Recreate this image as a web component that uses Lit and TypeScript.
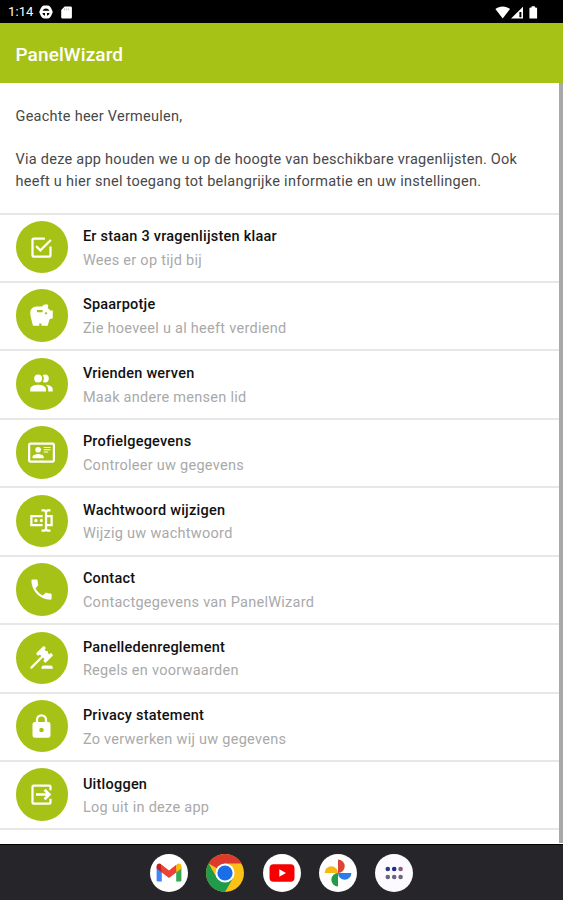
import { LitElement, html, css, svg } from "lit";
import { customElement } from "lit/decorators.js";

interface MenuItem {
  title: string;
  subtitle: string;
  icon: string;
}

const ITEMS: MenuItem[] = [
  {
    title: "Er staan 3 vragenlijsten klaar",
    subtitle: "Wees er op tijd bij",
    icon: "M19,19H5V5H15V3H5C3.89,3 3,3.89 3,5V19A2,2 0 0,0 5,21H19A2,2 0 0,0 21,19V11H19M7.91,10.08L6.5,11.5L11,16L21,6L19.59,4.58L11,13.17L7.91,10.08Z",
  },
  {
    title: "Spaarpotje",
    subtitle: "Zie hoeveel u al heeft verdiend",
    icon: "M19.83 7.5L17.56 5.23C17.63 4.81 17.74 4.42 17.88 4.08C17.96 3.9 18 3.71 18 3.5C18 2.67 17.33 2 16.5 2C14.86 2 13.41 2.79 12.5 4H7.5C4.46 4 2 6.46 2 9.5S4.5 21 4.5 21H10V19H12V21H17.5L19.18 15.41L22 14.47V7.5H19.83M13 9H8V7H13V9M16 11C15.45 11 15 10.55 15 10S15.45 9 16 9C16.55 9 17 9.45 17 10S16.55 11 16 11Z",
  },
  {
    title: "Vrienden werven",
    subtitle: "Maak andere mensen lid",
    icon: "M16 17V19H2V17S2 13 9 13 16 17 16 17M12.5 7.5A3.5 3.5 0 1 0 9 11A3.5 3.5 0 0 0 12.5 7.5M15.94 13A5.32 5.32 0 0 1 18 17V19H22V17S22 13.37 15.94 13M15 4A3.39 3.39 0 0 0 13.07 4.59A5 5 0 0 1 13.07 10.41A3.39 3.39 0 0 0 15 11A3.5 3.5 0 0 0 15 4Z",
  },
  {
    title: "Profielgegevens",
    subtitle: "Controleer uw gegevens",
    icon: "M22,3H2C0.91,3.04 0.04,3.91 0,5V19C0.04,20.09 0.91,20.96 2,21H22C23.09,20.96 23.96,20.09 24,19V5C23.96,3.91 23.09,3.04 22,3M22,19H2V5H22V19M14,17V15.75C14,14.09 10.66,13.25 9,13.25C7.34,13.25 4,14.09 4,15.75V17H14M9,7A2.5,2.5 0 0,0 6.5,9.5A2.5,2.5 0 0,0 9,12A2.5,2.5 0 0,0 11.5,9.5A2.5,2.5 0 0,0 9,7M14,7V8H20V7H14M14,9V10H20V9H14M14,11V12H18V11H14",
  },
  {
    title: "Wachtwoord wijzigen",
    subtitle: "Wijzig uw wachtwoord",
    icon: "M17,7H22V17H17V19A1,1 0 0,0 18,20H20V22H17.5C16.95,22 16,21.55 16,21C16,21.55 15.05,22 14.5,22H12V20H14A1,1 0 0,0 15,19V5A1,1 0 0,0 14,4H12V2H14.5C15.05,2 16,2.45 16,3C16,2.45 16.95,2 17.5,2H20V4H18A1,1 0 0,0 17,5V7M2,7H13V9H4V15H13V17H2V7M20,15V9H17V15H20M8.5,12A1.5,1.5 0 0,0 7,10.5A1.5,1.5 0 0,0 5.5,12A1.5,1.5 0 0,0 7,13.5A1.5,1.5 0 0,0 8.5,12M13,10.89C12.39,10.33 11.44,10.38 10.88,11C10.32,11.6 10.37,12.55 11,13.11C11.55,13.63 12.43,13.63 13,13.11V10.89Z",
  },
  {
    title: "Contact",
    subtitle: "Contactgegevens van PanelWizard",
    icon: "M6.62,10.79C8.06,13.62 10.38,15.94 13.21,17.38L15.41,15.18C15.69,14.9 16.08,14.82 16.43,14.93C17.55,15.3 18.75,15.5 20,15.5A1,1 0 0,1 21,16.5V20A1,1 0 0,1 20,21A17,17 0 0,1 3,4A1,1 0 0,1 4,3H7.5A1,1 0 0,1 8.5,4C8.5,5.25 8.7,6.45 9.07,7.57C9.18,7.92 9.1,8.31 8.82,8.59L6.62,10.79Z",
  },
  {
    title: "Panelledenreglement",
    subtitle: "Regels en voorwaarden",
    icon: "M2.3,20.28L11.9,10.68L10.5,9.26L9.78,9.97C9.39,10.36 8.76,10.36 8.37,9.97L7.66,9.26C7.27,8.87 7.27,8.24 7.66,7.85L13.32,2.19C13.71,1.8 14.34,1.8 14.73,2.19L15.44,2.9C15.83,3.29 15.83,3.92 15.44,4.31L14.73,5L16.15,6.43C16.54,6.04 17.17,6.04 17.56,6.43C17.95,6.82 17.95,7.46 17.56,7.85L18.97,9.26L19.68,8.55C20.07,8.16 20.71,8.16 21.1,8.55L21.8,9.26C22.19,9.65 22.19,10.29 21.8,10.68L16.15,16.33C15.76,16.72 15.12,16.72 14.73,16.33L14.03,15.63C13.63,15.24 13.63,14.6 14.03,14.21L14.73,13.5L13.32,12.09L3.71,21.7C3.32,22.09 2.69,22.09 2.3,21.7C1.91,21.31 1.91,20.67 2.3,20.28M20,19A2,2 0 0,1 22,21V22H12V21A2,2 0 0,1 14,19H20Z",
  },
  {
    title: "Privacy statement",
    subtitle: "Zo verwerken wij uw gegevens",
    icon: "M12,17A2,2 0 0,0 14,15C14,13.89 13.1,13 12,13A2,2 0 0,0 10,15A2,2 0 0,0 12,17M18,8A2,2 0 0,1 20,10V20A2,2 0 0,1 18,22H6A2,2 0 0,1 4,20V10C4,8.89 4.9,8 6,8H7V6A5,5 0 0,1 12,1A5,5 0 0,1 17,6V8H18M12,3A3,3 0 0,0 9,6V8H15V6A3,3 0 0,0 12,3Z",
  },
  {
    title: "Uitloggen",
    subtitle: "Log uit in deze app",
    icon: "M5 3H19A2 2 0 0 1 21 5V8.2H19V5H5V19H19V15.8H21V19A2 2 0 0 1 19 21H5A2 2 0 0 1 3 19V5A2 2 0 0 1 5 3ZM13.9 15.4L16.2 13.2H7V10.8H16.2L13.9 8.6L15.6 6.9L20.7 12L15.6 17.1Z",
  },
];

const DOCK = [
  svg`<circle cx="20" cy="20" r="19" fill="#fff"/>
    <path d="M7.6 14V27.2A1.3 1.3 0 0 0 8.9 28.5H12.8V17Z" fill="#4285f4"/>
    <path d="M27.2 17V28.5H31.1A1.3 1.3 0 0 0 32.4 27.2V14Z" fill="#34a853"/>
    <path d="M27.2 12.6V19.6L32.4 15.4V13.2C32.4 10.6 29.6 9.6 27.8 11.2Z" fill="#fbbc04"/>
    <path d="M7.6 13.2V15.4L12.8 19.6V12.6L12.2 11.2C10.4 9.6 7.6 10.6 7.6 13.2Z" fill="#c5221f"/>
    <path d="M12.8 19.6V11.8L20 17.4L27.2 11.8V19.6L20 25Z" fill="#ea4335"/>`,
  svg`<circle cx="20" cy="20" r="19" fill="#fbc116"/>
    <path d="M20 20L3.6 10.5A19 19 0 0 1 36.4 10.5H20Z" fill="#dc3a2c"/>
    <path d="M3.6 10.5A19 19 0 0 0 20 39L28.2 24.8L20 20L11.8 24.8Z" fill="#219a4b"/>
    <circle cx="20" cy="20" r="9.6" fill="#fff"/>
    <circle cx="20" cy="20" r="7.6" fill="#1a6fe8"/>`,
  svg`<circle cx="20" cy="20" r="19" fill="#fff"/>
    <rect x="7.5" y="11.2" width="25" height="17.6" rx="4" fill="#f60002"/>
    <path d="M17.3 16.2V23.8L24 20Z" fill="#fff"/>`,
  svg`<circle cx="20" cy="20" r="19" fill="#fff"/>
    <path d="M20 20V6.6A6.7 6.7 0 0 1 20 20Z" fill="#dc4437"/>
    <path d="M20 20H33.4A6.7 6.7 0 0 1 20 20Z" fill="#2b7de9"/>
    <path d="M20 20V33.4A6.7 6.7 0 0 1 20 20Z" fill="#259b48"/>
    <path d="M20 20H6.6A6.7 6.7 0 0 1 20 20Z" fill="#f6b914"/>`,
  svg`<circle cx="20" cy="20" r="19" fill="#fdfaff"/>
    <circle cx="13.8" cy="16" r="2.3" fill="#303a80"/>
    <circle cx="20.2" cy="16" r="2.3" fill="#1f2b8e"/>
    <circle cx="26.6" cy="16" r="2.3" fill="#8d5b78"/>
    <circle cx="13.8" cy="24" r="2.3" fill="#68687a"/>
    <circle cx="20.2" cy="24" r="2.3" fill="#68687a"/>
    <circle cx="26.6" cy="24" r="2.3" fill="#68687a"/>`,
];

@customElement("app-root")
export class AppRoot extends LitElement {
  static styles = css`
    :host {
      display: flex;
      flex-direction: column;
      position: relative;
      height: 900px;
      overflow: hidden;
      background: #fff;
      font-family: Roboto, "Liberation Sans", sans-serif;
    }
    .status {
      flex: none;
      height: 22.5px;
      background: #000;
      color: #fff;
      display: flex;
      align-items: center;
      justify-content: space-between;
      box-sizing: border-box;
      padding: 2px 25px 0 8px;
    }
    .group {
      display: flex;
      align-items: center;
    }
    .clock {
      font-size: 13px;
      line-height: 20px;
      width: 31px;
      letter-spacing: 0.1px;
    }
    .glyph {
      display: block;
      fill: #fff;
    }
    .sd {
      margin-left: 8px;
    }
    .battery {
      margin-left: 4.5px;
    }
    .header {
      flex: none;
      height: 60px;
      box-sizing: border-box;
      padding: 3px 15.5px 0;
      background: #a7c216;
      color: #fff;
      display: flex;
      align-items: center;
      font-size: 19px;
      font-weight: 500;
      letter-spacing: 0.1px;
    }
    .body {
      flex: 1;
      min-height: 0;
      overflow: hidden;
    }
    .intro {
      box-sizing: border-box;
      height: 130px;
      padding: 23.6px 15.5px 0;
      color: #484848;
      font-size: 14.5px;
      line-height: 21.6px;
      letter-spacing: 0.26px;
      white-space: nowrap;
    }
    .intro p {
      margin: 0 0 21.6px;
    }
    .row {
      height: 68.44px;
      box-sizing: border-box;
      border-top: 2px solid #e7e7e8;
      padding: 0 0 1.2px 15.5px;
      display: flex;
      align-items: center;
      gap: 15px;
    }
    .end {
      border-top: 2px solid #e7e7e8;
    }
    .badge {
      width: 52.4px;
      height: 52.4px;
      border-radius: 50%;
      background: #a7c216;
      display: flex;
      align-items: center;
      justify-content: center;
    }
    .badge svg {
      width: 27px;
      height: 27px;
      fill: #fff;
    }
    .texts {
      padding-top: 3px;
    }
    .title,
    .sub {
      line-height: 23.6px;
      font-size: 14.5px;
      white-space: nowrap;
    }
    .title {
      color: #111;
      font-weight: 500;
      letter-spacing: 0.23px;
    }
    .sub {
      color: #a9a9a9;
      letter-spacing: 0.27px;
    }
    .scroll {
      position: absolute;
      right: 0;
      top: 82.5px;
      width: 3.6px;
      height: 760px;
      background: #a9a9a9;
    }
    .dock {
      flex: none;
      height: 56px;
      box-sizing: border-box;
      border-top: 1px solid #000;
      background: #262529;
      display: flex;
      align-items: center;
      justify-content: center;
      gap: 16.3px;
    }
    .dock svg {
      display: block;
      width: 40px;
      height: 40px;
    }
  `;

  render() {
    return html`
      <div class="status">
        <div class="group">
          <span class="clock">1:14</span>
          <svg class="glyph" width="14" height="14" viewBox="0 0 14 14">
            <path
              fill-rule="evenodd"
              d="M3 1.6L4.6 0.6H9.4L11 1.6L12.2 3.2L13.8 7L12.2 10.8L11 12.4L9.4 13.4H4.6L3 12.4L1.8 10.8L0.2 7L1.8 3.2ZM3.6 5.7H10.4A3.7 3.7 0 0 0 3.6 5.7ZM3.3 8A3.8 3.8 0 0 0 6 10.7V8ZM8 8V10.7A3.8 3.8 0 0 0 10.7 8Z"
            />
          </svg>
          <svg class="glyph sd" width="11" height="13" viewBox="0 0 11 13">
            <path d="M3.6 0.5H9.7A1.2 1.2 0 0 1 10.9 1.7V11.3A1.2 1.2 0 0 1 9.7 12.5H1.4A1.2 1.2 0 0 1 0.2 11.3V3.9Z" />
            <path d="M3.6 2.4V4.3M5.6 2.4V4.3M7.6 2.4V4.3" stroke="#999" stroke-width="0.7" />
          </svg>
        </div>
        <div class="group">
          <svg class="glyph" width="30" height="13" viewBox="0 0 30 13">
            <path d="M0.4 3.1C4.4 -0.3 11 -0.3 15 3.1L7.7 12.6Z" />
            <path fill-rule="evenodd" d="M28 0.8V12.6H16ZM24.4 6V11.2H26.4V6Z" />
          </svg>
          <svg class="glyph battery" width="9" height="13" viewBox="0 0 9 13">
            <path d="M2.6 0.2H5.9V1.4H6.9A1.2 1.2 0 0 1 8.1 2.6V12.6H0.4V2.6A1.2 1.2 0 0 1 1.6 1.4H2.6Z" />
          </svg>
        </div>
      </div>
      <div class="header">PanelWizard</div>
      <div class="body">
        <div class="intro">
          <p>Geachte heer Vermeulen,</p>
          <p>
            Via deze app houden we u op de hoogte van beschikbare vragenlijsten. Ook<br />heeft
            u hier snel toegang tot belangrijke informatie en uw instellingen.
          </p>
        </div>
        ${ITEMS.map(
          (item) => html`
            <div class="row">
              <div class="badge">
                <svg viewBox="0 0 24 24"><path d=${item.icon} /></svg>
              </div>
              <div class="texts">
                <div class="title">${item.title}</div>
                <div class="sub">${item.subtitle}</div>
              </div>
            </div>
          `
        )}
        <div class="end"></div>
      </div>
      <div class="dock">
        ${DOCK.map((art) => html`<svg viewBox="0 0 40 40">${art}</svg>`)}
      </div>
      <div class="scroll"></div>
    `;
  }
}
